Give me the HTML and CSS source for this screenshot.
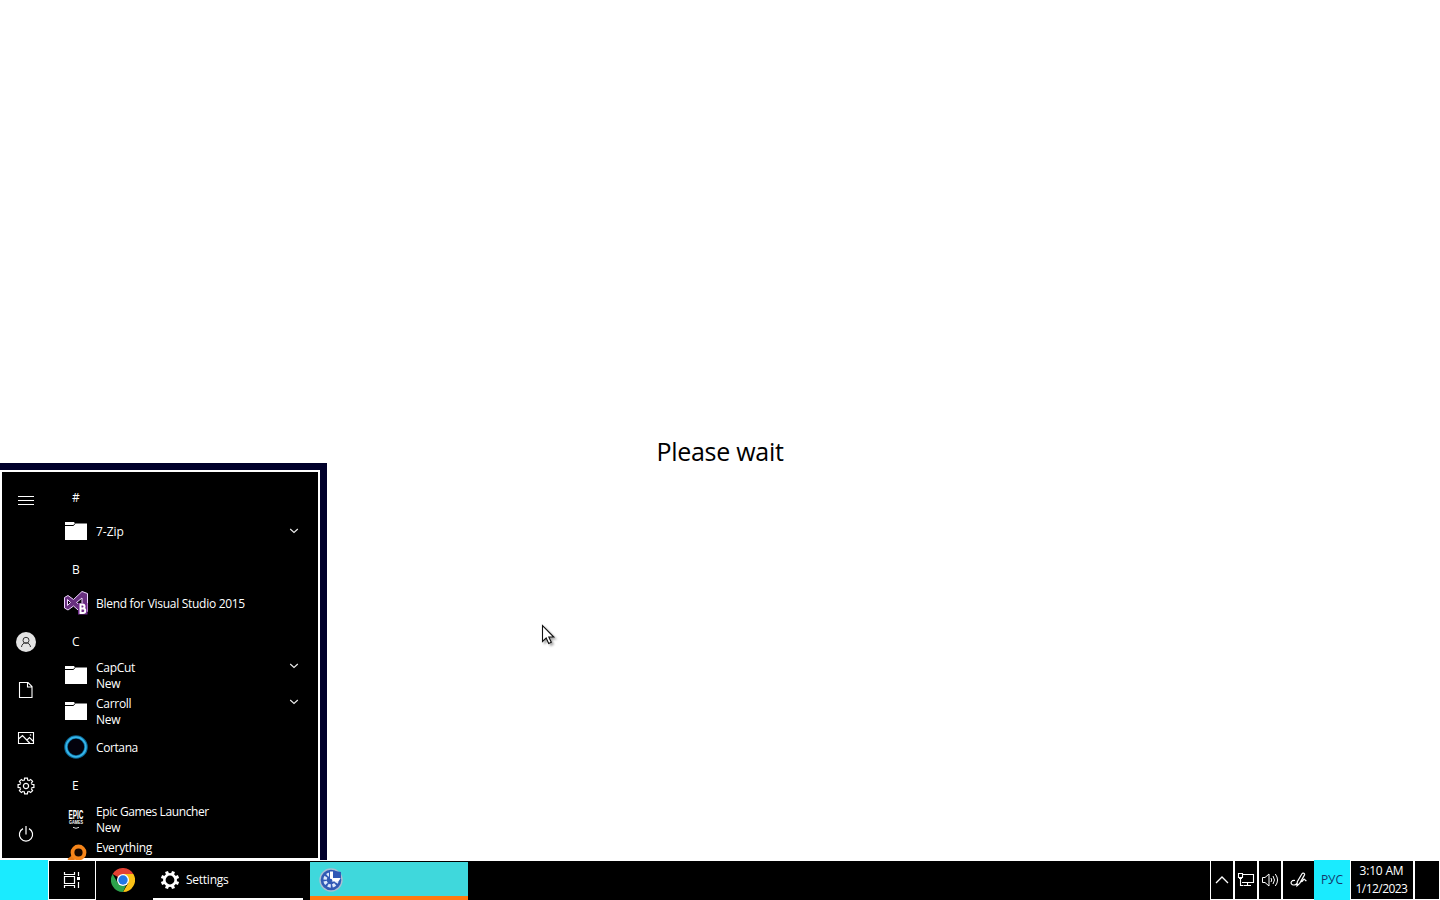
FILE: index.html
```
<!DOCTYPE html>
<html lang="en">
<head>
<meta charset="utf-8">
<title>Desktop</title>
<link rel="stylesheet" href="styles.css">
</head>
<body>
<svg class="defs" width="0" height="0">
  <symbol id="folder" viewBox="0 0 24 24"><path fill="#fff" d="M1 3h9l1 1.500h12V21H1z"/><path d="M1 6.500h8.500l1.500-2" fill="none" stroke="#000" stroke-width="1"/></symbol>
  <symbol id="chev" viewBox="0 0 10 6"><path d="M1.200 1L5 4.500 8.800 1" fill="none" stroke="#eee" stroke-width="1.100"/></symbol>
  <path id="tooth" d="M-2.310-5.590L-1.700-5.900-1.400-7.900H1.400L1.700-5.900 2.310-5.590" fill="none" stroke="#fff" stroke-width="1.200"/>
</svg>
<div class="desktop">
  <main class="screen">
    <p class="wait">Please wait</p>
  </main>
  <section class="start">
    <div class="menu">
      <nav class="rail">
        <svg class="ico" viewBox="0 0 20 20"><path d="M2 6.500h16M2 10.500h16M2 14.500h16" stroke="#fff" fill="none"/></svg>
        <span class="grow"></span>
        <svg class="ico" viewBox="0 0 20 20"><circle cx="10" cy="10" r="10" fill="#e3e3e3"/><circle cx="10" cy="8.300" r="3" fill="none" stroke="#333"/><path d="M5.500 15c.3-2.600 2-4.200 4.500-4.200s4.200 1.600 4.500 4.200" fill="none" stroke="#333"/></svg>
        <svg class="ico" viewBox="0 0 20 20"><path d="M3.500 2.500h8.500l4 4v11h-12.500zM11.500 2.500v4.500h4.500" stroke="#fff" fill="none" stroke-width="1.100"/></svg>
        <svg class="ico" viewBox="0 0 20 20"><path d="M2.500 4.500h15v11h-15zM2.500 11l4-3.500 7.500 8M11 12l2.500-2.500 4 4" stroke="#fff" fill="none" stroke-width="1.100"/><circle cx="14.500" cy="7" r=".8" fill="#fff"/></svg>
        <svg class="ico" viewBox="-10 -10 20 20"><use href="#tooth"/><use href="#tooth" transform="rotate(45)"/><use href="#tooth" transform="rotate(90)"/><use href="#tooth" transform="rotate(135)"/><use href="#tooth" transform="rotate(180)"/><use href="#tooth" transform="rotate(225)"/><use href="#tooth" transform="rotate(270)"/><use href="#tooth" transform="rotate(315)"/><circle r="2.600" fill="none" stroke="#fff" stroke-width="1.200"/></svg>
        <svg class="ico" viewBox="0 0 20 20"><path d="M7 4.600a6.600 6.600 0 1 0 6 0M10 2v8.500" fill="none" stroke="#fff" stroke-width="1.200"/></svg>
      </nav>
      <div class="apps">
        <div class="head">#</div>
        <div class="app"><svg class="pic"><use href="#folder"/></svg><span class="name zip">7-Zip</span><svg class="chev"><use href="#chev"/></svg></div>
        <div class="head">B</div>
        <div class="app"><svg class="pic" viewBox="0 0 24 24"><path d="M18 .5l5.500 2v18l-5.500 2-8.500-7.500-5.500 4L.5 17V6.500L4 4.500l5.500 4z" fill="#68307f" stroke="#efd7ff"/><path d="M18 7v9l-5.500-4.500zM3.500 8.500v6l3-3z" fill="#0a020f" stroke="#efd7ff" stroke-width="1"/><path d="M14 12h9.500v11.500H14z" fill="#702a8c"/><path d="M16.500 13.500v8.500h2.500a2 2 0 0 0 0-4.500h-2.500 2a2 2 0 0 0 0-4z" fill="none" stroke="#fff" stroke-width="2"/></svg><span class="name">Blend for Visual Studio 2015</span></div>
        <div class="head">C</div>
        <div class="app two"><svg class="pic"><use href="#folder"/></svg><span class="name">CapCut<br>New</span><svg class="chev"><use href="#chev"/></svg></div>
        <div class="app two"><svg class="pic"><use href="#folder"/></svg><span class="name">Carroll<br>New</span><svg class="chev"><use href="#chev"/></svg></div>
        <div class="app"><svg class="pic" viewBox="0 0 24 24"><circle cx="12" cy="12" r="10" fill="#02020c" stroke="#0b6794" stroke-width="3.600"/><circle cx="12" cy="12" r="9.800" fill="none" stroke="#35b5ea" stroke-width="1.800"/></svg><span class="name cortana">Cortana</span></div>
        <div class="head">E</div>
        <div class="app two"><svg class="pic" viewBox="0 0 24 24"><text x="4.500" y="12" class="epic" textLength="15" lengthAdjust="spacingAndGlyphs">EPIC</text><text x="5" y="17" class="games" textLength="14" lengthAdjust="spacingAndGlyphs">GAMES</text><path d="M9 20.300l3 1 3-1" fill="none" stroke="#ddd"/></svg><span class="name"><span class="launcher">Epic Games Launcher</span><br>New</span></div>
        <div class="app two"><svg class="pic over" viewBox="0 0 24 17"><path d="M10 14l-5 4" stroke="#e87a16" stroke-width="5"/><circle cx="14.500" cy="9.500" r="6" fill="#160800" stroke="#f5851a" stroke-width="3.800"/></svg><span class="name">Everything</span></div>
      </div>
    </div>
  </section>
  <footer class="bar">
    <div class="startbtn"></div>
    <div class="taskview"><svg width="20" height="20" viewBox="0 0 20 20"><path d="M2.500 2v2.500h10V2M2.500 18v-2.500h10V18M2.500 6.500h10v7h-10zM16.500 2v4M16.500 12v6" fill="none" stroke="#fff" stroke-width="1.200"/><path d="M15 7h3v3h-3z" fill="#fff"/></svg></div>
    <div class="chrome"><svg width="24" height="24" viewBox="0 0 24 24"><path d="M12 12L1.600 6a12 12 0 0 1 20.800 0z" fill="#e34133"/><path d="M12 12V6h10.400A12 12 0 0 1 12 24l5.200-9z" fill="#fbc116"/><path d="M1.600 6l5.200 9 5.200 3 3.200-.9L12 24A12 12 0 0 1 1.600 6z" fill="#2da24c"/><circle cx="12" cy="12" r="6" fill="#fff"/><circle cx="12" cy="12" r="4.700" fill="#2277e5"/></svg></div>
    <div class="settings"><svg width="20" height="20" viewBox="-10 -10 20 20"><circle r="5.700" fill="none" stroke="#fff" stroke-width="2.600"/><path d="M0-9.200v3M0 9.200v-3M-9.200 0h3M9.200 0h-3M-6.500-6.500l2.200 2.200M6.500 6.500l-2.200-2.200M-6.500 6.500l2.200-2.200M6.500-6.500l-2.200 2.200" stroke="#fff" stroke-width="3.200" transform="rotate(22.500)"/></svg><span>Settings</span></div>
    <div class="active"><svg width="24" height="24" viewBox="-12 -12 24 24"><circle r="11" fill="#3159b5" stroke="#a9bfd2" stroke-width="1.400"/><circle r="6" fill="none" stroke="#dce8fb" stroke-width="3.400" stroke-dasharray="3 1.700"/><path d="M-2 0V-10l12 2v8z" fill="#3159b5"/><path d="M-1-8.500h3v6.500H9.500Q8.500 1.500 5 1.500H-1z" fill="#fff"/><circle r="1.800" cx="-.5" cy=".5" fill="#3159b5"/></svg></div>
    <span class="grow"></span>
    <div class="tray"><svg width="14" height="8" viewBox="0 0 14 8"><path d="M1 7l6-6 6 6" fill="none" stroke="#fff" stroke-width="1.300"/></svg></div>
    <div class="tray"><svg width="18" height="16" viewBox="0 0 18 16"><path d="M6 2.500h10.500v8H5M3.500 7v6.500h2.500M10.500 10.500v3M6.500 13.500h7.500M1.500 1.500h4v4h-4zM2 6.500h3" fill="none" stroke="#fff" stroke-width="1.100"/></svg></div>
    <div class="tray"><svg width="18" height="16" viewBox="0 0 18 16"><path d="M1.500 5.500h2.500l4-3.500v12l-4-3.500H1.500zM10 6q1.500 2 0 4M12 4q3 4 0 8M14.300 2q4.500 6 0 12" fill="none" stroke="#fff" stroke-width="1"/></svg></div>
    <div class="tray pen"><svg width="18" height="18" viewBox="0 0 18 18"><path d="M5 9.500C1.500 9 .5 11.500 1.500 13s4 1.300 5.500-.5M7 14.800l.3-4 4.700-8c1-1.600 3.200-.4 2.400 1.300l-4.700 8.300zM11 10.500c1.500 1 2.300-2.800 3.500-2.300s.2 2 2 1.300" fill="none" stroke="#fff" stroke-width="1.200"/></svg></div>
    <div class="lang">РУС</div>
    <div class="clock"><span class="time">3:10 AM</span><span class="date">1/12/2023</span></div>
    <div class="peek"></div>
  </footer>
  <svg class="cursor" width="18" height="24" viewBox="0 0 18 24"><path d="M1.500 1.500v16l3.700-3.500 2.500 5.500 2.600-1.200-2.500-5.300h5z" fill="#fff" stroke="#111" stroke-width="1.100"/></svg>
</div>
</body>
</html>
```
FILE: styles.css
```
body { margin: 0; }
* { box-sizing: border-box; }
.defs { position: absolute; }
.desktop {
  position: relative; width: 1440px; height: 900px; overflow: hidden;
  display: flex; flex-direction: column; background: #fff;
  font: 12px/16px "Open Sans", "Noto Sans", sans-serif; color: #fff;
}
svg { display: block; flex: none; }
.grow { flex: 1; }
.screen { flex: 1; display: flex; justify-content: center; }
.wait { margin: 433px 0 0; font-size: 25px; letter-spacing: -.28px; line-height: 36px; height: 36px; color: #000; white-space: nowrap; }

.start { position: absolute; left: 0; bottom: 40px; width: 327px; height: 397px; background: #00002a; padding-top: 7px; }
.menu { width: 320px; height: 390px; border: 2px solid #fff; background: #000; display: flex; }
.rail { width: 48px; display: flex; flex-direction: column; align-items: center; gap: 28px; padding: 18px 0 14px; }
.ico { width: 20px; height: 20px; }
.rail .grow { margin-bottom: -28px; }
.apps { flex: 1; padding: 6px 0 0 14px; }
.head { height: 36px; padding: 12px 0 0 8px; }
.app { height: 36px; display: flex; padding-top: 5px; }
.app:last-child { height: 22px; }
.pic { width: 24px; height: 24px; margin-right: 8px; }
.pic.over { height: 17px; }
.name { flex: 1; padding-top: 5px; white-space: nowrap; letter-spacing: -.29px; }
.zip { letter-spacing: 0; }
.cortana { letter-spacing: -.4px; }
.launcher { letter-spacing: -.4px; }
.chev { width: 10px; height: 6px; margin: 9px 19px 0 0; }
.two .name { margin-top: -8px; }
.two .chev { margin-top: 0; }
.epic { font: bold 12px/1 "Liberation Sans", sans-serif; fill: #fff; }
.games { font: bold 4.500px/1 "Liberation Sans", sans-serif; fill: #fff; }

.bar { height: 40px; border-top: 1px solid #fff; background: #000; display: flex; }
.startbtn { width: 48px; margin-top: -1px; background: #1aebff; }
.taskview { width: 48px; border: 1px solid #fff; border-top: 0; display: flex; align-items: center; justify-content: center; }
.chrome { width: 57px; padding: 7px 0 0 15px; }
.settings { width: 150px; border-bottom: 2px solid #fff; display: flex; align-items: center; gap: 6px; padding-left: 7px; letter-spacing: -.25px; }
.active { width: 158px; margin: 1px 0 0 7px; background: #3fd8dc; border-bottom: 4px solid #ff7a10; padding: 6px 0 0 9px; }
.tray { width: 24px; border: 1px solid #fff; border-top: 0; display: flex; align-items: center; justify-content: center; }
.pen { width: 32px; border-right: 0; }
.lang { width: 36px; margin-top: -1px; background: #1aebff; color: #14386b; display: flex; align-items: center; justify-content: center; }
.clock { width: 64px; border: 1px solid #fff; border-top: 0; display: flex; flex-direction: column; align-items: center; line-height: 18px; padding: 1px 1px 0 0; }
.time { letter-spacing: -.2px; }
.date { letter-spacing: -.55px; }
.peek { width: 26px; border: 1px solid #fff; border-top: 0; }
.cursor { position: absolute; left: 541px; top: 624px; filter: drop-shadow(2px 2px 1px rgba(0,0,0,.35)); }
```
